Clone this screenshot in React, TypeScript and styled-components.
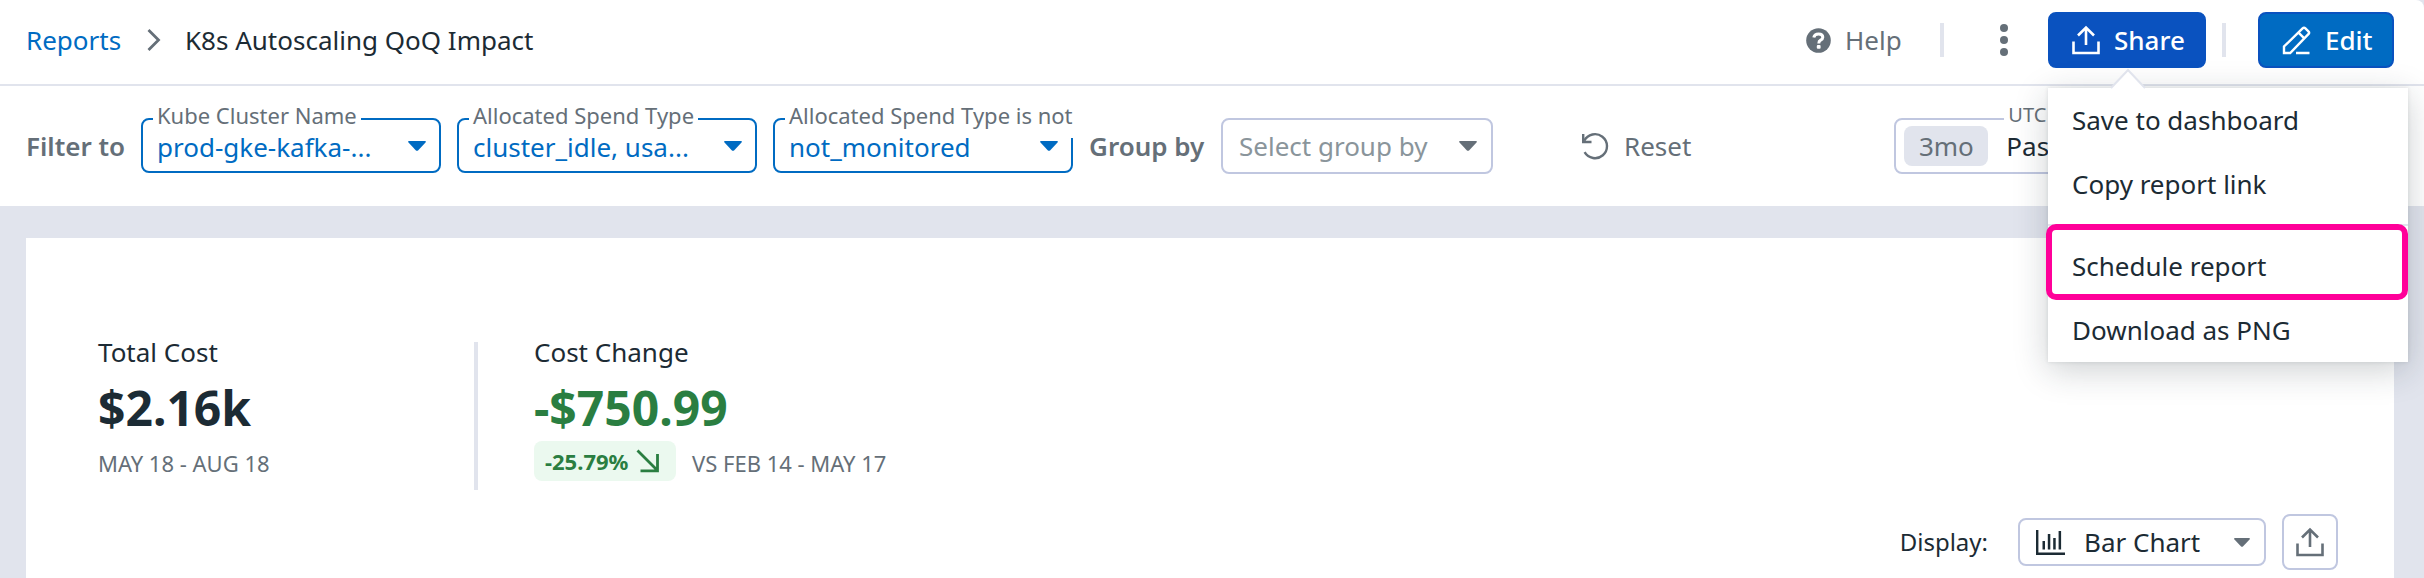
import React from 'react';
import styled, { createGlobalStyle } from 'styled-components';

const ink = '#1c2b34';
const muted = '#656f78';
const line = '#e1e4ed';
const outline = '#c0c7e0';
const blue = '#006bc2';
const darkBlue = '#0a52bf';
const green = '#2a7e41';

const GlobalStyle = createGlobalStyle`
  * { box-sizing: border-box; }
  body { margin: 0; background: ${line}; overflow: hidden; }
`;

const Page = styled.div`
  height: 578px;
  overflow: hidden;
  background: ${line};
  color: ${ink};
  font: 400 26px/36px 'Noto Sans', sans-serif;
  white-space: nowrap;
`;

const Header = styled.header`
  display: flex;
  align-items: flex-start;
  justify-content: space-between;
  height: 86px;
  padding: 12px 30px 0 26px;
  background: #fff;
  border-bottom: 2px solid ${line};
  border-top-right-radius: 8px;
`;

const Breadcrumbs = styled.nav`
  display: flex;
  align-items: center;
  height: 56px;
`;

const CrumbLink = styled.a`
  width: 121px;
  color: ${blue};
`;

const CrumbCurrent = styled.span`
  margin-left: 24px;
`;

const Actions = styled.div`
  display: flex;
  align-items: center;
  height: 56px;
`;

const HelpLink = styled.div`
  display: flex;
  align-items: center;
  gap: 14px;
  width: 134px;
  color: ${muted};
`;

const Divider = styled.div`
  width: 4px;
  height: 34px;
  background: ${line};
`;

const MoreButton = styled.div`
  display: flex;
  justify-content: center;
  width: 24px;
  margin: 0 32px 0 48px;
`;

const ShareWrap = styled.div`
  position: relative;
  margin-right: 16px;
`;

const Button = styled.div<{ $active?: boolean; $width: number }>`
  display: flex;
  align-items: center;
  gap: 14px;
  width: ${(p) => p.$width}px;
  height: 56px;
  padding-left: 22px;
  border: 2px solid ${darkBlue};
  border-radius: 8px;
  background: ${(p) => (p.$active ? darkBlue : blue)};
  color: #fff;
  font-weight: 500;
`;

const EditWrap = styled.div`
  margin-left: 32px;
`;

const Menu = styled.div`
  position: absolute;
  z-index: 3;
  top: 76px;
  left: 0;
  width: 360px;
  height: 274px;
  background: #fff;
  box-shadow: 0 8px 32px rgba(28, 43, 52, 0.22), 0 0 4px rgba(28, 43, 52, 0.12);
`;

const MenuCaret = styled.svg`
  position: absolute;
  top: -20px;
  left: 62px;
`;

const MenuItem = styled.div<{ $highlight?: boolean }>`
  position: relative;
  height: 64px;
  padding: 14px 24px;
  color: ${ink};

  ${(p) =>
    p.$highlight &&
    `&::after {
      content: '';
      position: absolute;
      inset: -10px 0 -2px -2px;
      border: 6px solid #ff0099;
      border-radius: 10px;
    }`}
`;

const MenuSeparator = styled.div`
  height: 2px;
  margin: 8px 0;
  background: ${line};
`;

const FilterBar = styled.section`
  display: flex;
  align-items: flex-start;
  height: 120px;
  padding: 32px 0 0 26px;
  background: #fff;
`;

const BarLabel = styled.span<{ $width: number }>`
  width: ${(p) => p.$width}px;
  line-height: 56px;
  font-weight: 600;
  color: ${muted};
`;

const Select = styled.div<{ $width: number; $active?: boolean; $height?: number }>`
  position: relative;
  display: flex;
  align-items: center;
  justify-content: space-between;
  width: ${(p) => p.$width}px;
  height: ${(p) => p.$height ?? 56}px;
  padding: ${(p) => (p.$active ? '0 13px 0 14px' : '0 14px 0 16px')};
  border: 2px solid ${(p) => (p.$active ? blue : outline)};
  border-radius: 8px;
  color: ${(p) => (p.$active ? blue : ink)};
`;

const FilterGroup = styled.div`
  display: flex;
  gap: 16px;
  margin-right: 16px;
`;

const FloatingLabel = styled.span<{ $left?: number; $size?: number }>`
  position: absolute;
  top: -17px;
  left: ${(p) => p.$left ?? 10}px;
  height: 35px;
  padding: 0 4px;
  background: #fff;
  color: ${muted};
  font-size: ${(p) => p.$size ?? 22}px;
  line-height: 24px;
`;

const WideLabel = styled(FloatingLabel)`
  right: -2px;
  padding-right: 0;
`;

const SelectValue = styled.span`
  position: relative;
  top: 1px;
`;

const Placeholder = styled.span`
  color: #8a959b;
`;

const ResetButton = styled.div`
  display: flex;
  align-items: center;
  gap: 15px;
  height: 56px;
  margin-left: 88px;
  color: ${muted};
`;

const DateSelect = styled(Select)`
  margin-left: 203px;
  justify-content: flex-start;
  gap: 18px;
  padding-left: 8px;
`;

const RangeBadge = styled.span`
  width: 84px;
  height: 40px;
  border-radius: 8px;
  background: ${line};
  color: ${muted};
  line-height: 40px;
  text-align: center;
`;

const Card = styled.main`
  display: flex;
  flex-direction: column;
  margin: 32px 30px 0 26px;
  height: 400px;
  padding: 104px 56px 0 72px;
  background: #fff;
`;

const Metrics = styled.section`
  display: flex;
  height: 148px;
`;

const Metric = styled.div<{ $width?: number }>`
  display: flex;
  flex-direction: column;
  width: ${(p) => (p.$width ? `${p.$width}px` : 'auto')};
`;

const MetricName = styled.div`
  height: 28px;
  line-height: 20px;
`;

const MetricValue = styled.div<{ $positive?: boolean }>`
  height: 71px;
  line-height: 75px;
  font-size: 48px;
  font-weight: 700;
  color: ${(p) => (p.$positive ? green : ink)};
`;

const MetricFoot = styled.div`
  display: flex;
  align-items: center;
  gap: 16px;
  height: 40px;
  font-size: 22px;
  color: ${muted};
`;

const FootText = styled.span`
  padding-top: 4px;
`;

const MetricDivider = styled.div`
  width: 4px;
  height: 148px;
  margin-right: 56px;
  background: ${line};
`;

const ChangeBadge = styled.span`
  display: flex;
  align-items: center;
  gap: 8px;
  width: 142px;
  height: 40px;
  padding-left: 11px;
  border-radius: 8px;
  background: #ebf9ef;
  color: ${green};
  font-weight: 700;
`;

const DisplayRow = styled.section`
  display: flex;
  align-items: center;
  justify-content: flex-end;
  height: 56px;
  margin-top: 24px;
`;

const DisplayLabel = styled.span`
  margin-right: 30px;
  font-size: 24px;
`;

const ChartName = styled.span`
  flex: 1;
  margin-left: 19px;
`;

const SquareButton = styled.div`
  display: flex;
  align-items: center;
  justify-content: center;
  width: 56px;
  height: 56px;
  margin-left: 16px;
  border: 2px solid ${outline};
  border-radius: 8px;
  color: ${muted};
`;

const Triangle = ({ width = 18, height = 10, color = 'currentColor' }: { width?: number; height?: number; color?: string }) => (
  <svg width={width} height={height} viewBox="0 0 18 10" preserveAspectRatio="none">
    <path d="M1 0H17Q18.5 .4 17.5 1.6L10.3 9.2Q9 10.4 7.7 9.2L.5 1.6Q-.5 .4 1 0Z" fill={color} />
  </svg>
);

const ShareIcon = () => (
  <svg width="28" height="30" viewBox="0 0 28 30" fill="none" stroke="currentColor" strokeWidth="2.6">
    <path d="M1.5 16.5V28H26.5V16.5" />
    <path d="M14 20V2.5M6 10.5L14 2.5L22 10.5" />
  </svg>
);

const filters = [
  { label: 'Kube Cluster Name', value: 'prod-gke-kafka-...' },
  { label: 'Allocated Spend Type', value: 'cluster_idle, usa...' },
  { label: 'Allocated Spend Type is not', value: 'not_monitored', wide: true },
];

export default function App() {
  return (
    <Page>
      <GlobalStyle />
      <Header>
        <Breadcrumbs>
          <CrumbLink>Reports</CrumbLink>
          <svg width="14" height="22" viewBox="0 0 14 22" fill="none" stroke={muted} strokeWidth="2.8">
            <path d="M1.5 1L11.5 11L1.5 21" />
          </svg>
          <CrumbCurrent>K8s Autoscaling QoQ Impact</CrumbCurrent>
        </Breadcrumbs>
        <Actions>
          <HelpLink>
            <svg width="25" height="25" viewBox="0 0 25 25">
              <circle cx="12.5" cy="12.5" r="12.3" fill={muted} />
              <path d="M7.8 9.6Q8.4 6 12.6 6Q16.8 6 16.8 9.3Q16.8 11 14.6 12.2Q12.8 13.1 12.8 15.4" fill="none" stroke="#fff" strokeWidth="3" />
              <rect x="10.8" y="17" width="3.8" height="3.8" rx="1" fill="#fff" />
            </svg>
            <span>Help</span>
          </HelpLink>
          <Divider />
          <MoreButton>
            <svg width="8" height="32" viewBox="0 0 8 32" fill={muted}>
              <circle cx="4" cy="4" r="4" />
              <circle cx="4" cy="16" r="4" />
              <circle cx="4" cy="28" r="4" />
            </svg>
          </MoreButton>
          <ShareWrap>
            <Button $active $width={158}>
              <ShareIcon />
              <span>Share</span>
            </Button>
            <Menu>
              <MenuCaret width="36" height="22" viewBox="0 0 36 22">
                <path d="M1 20L18 2L35 20V22H1Z" fill="#fff" />
                <path d="M1 20L18 2L35 20" fill="none" stroke={line} strokeWidth="2" />
              </MenuCaret>
              <MenuItem>Save to dashboard</MenuItem>
              <MenuItem>Copy report link</MenuItem>
              <MenuSeparator />
              <MenuItem $highlight>Schedule report</MenuItem>
              <MenuItem>Download as PNG</MenuItem>
            </Menu>
          </ShareWrap>
          <Divider />
          <EditWrap>
            <Button $width={136}>
              <svg width="29" height="29" viewBox="0 0 29 29" fill="none" stroke="currentColor" strokeWidth="2.4">
                <path d="M2 27V20.5L20.6 2.4Q22 1 23.4 2.4L26.4 5.4Q27.8 6.8 26.4 8.2L8.2 27Z" />
                <path d="M16.5 6.6L22.3 12.4M14 27H27.5" />
              </svg>
              <span>Edit</span>
            </Button>
          </EditWrap>
        </Actions>
      </Header>
      <FilterBar>
        <BarLabel $width={115}>Filter to</BarLabel>
        <FilterGroup>
          {filters.map((f) => (
            <Select key={f.label} $width={300} $height={55} $active>
              {f.wide ? <WideLabel>{f.label}</WideLabel> : <FloatingLabel>{f.label}</FloatingLabel>}
              <SelectValue>{f.value}</SelectValue>
              <Triangle />
            </Select>
          ))}
        </FilterGroup>
        <BarLabel $width={132}>Group by</BarLabel>
        <Select $width={272}>
          <Placeholder>Select group by</Placeholder>
          <Triangle color={muted} />
        </Select>
        <ResetButton>
          <svg width="28" height="28" viewBox="0 0 28 28" fill="none" stroke="currentColor" strokeWidth="2.4">
            <path d="M3.3 8.7A12 12 0 1 1 3.6 20.2" />
            <path d="M2.2 2V10H10.5" />
          </svg>
          <span>Reset</span>
        </ResetButton>
        <DateSelect $width={500}>
          <FloatingLabel $left={108} $size={20}>UTC</FloatingLabel>
          <RangeBadge>3mo</RangeBadge>
          <span>Past</span>
        </DateSelect>
      </FilterBar>
      <Card>
        <Metrics>
          <Metric $width={376}>
            <MetricName>Total Cost</MetricName>
            <MetricValue>$2.16k</MetricValue>
            <MetricFoot>
              <FootText>MAY 18 - AUG 18</FootText>
            </MetricFoot>
          </Metric>
          <MetricDivider />
          <Metric>
            <MetricName>Cost Change</MetricName>
            <MetricValue $positive>-$750.99</MetricValue>
            <MetricFoot>
              <ChangeBadge>
                <span>-25.79%</span>
                <svg width="24" height="24" viewBox="0 0 24 24" fill="none" stroke="currentColor" strokeWidth="2.8">
                  <path d="M1.5 1.5L21.5 21.5M21.5 5V21.8H4.5" />
                </svg>
              </ChangeBadge>
              <FootText>VS FEB 14 - MAY 17</FootText>
            </MetricFoot>
          </Metric>
        </Metrics>
        <DisplayRow>
          <DisplayLabel>Display:</DisplayLabel>
          <Select $width={248} $height={48}>
            <svg width="29" height="25" viewBox="0 0 29 25" fill={ink}>
              <path d="M0 0H2.4V22.6H29V25H0ZM6.5 11H9V19.5H6.5ZM11.8 4H14.3V19.5H11.8ZM17.2 8H19.7V19.5H17.2ZM22.6 1H25.1V19.5H22.6Z" />
            </svg>
            <ChartName>Bar Chart</ChartName>
            <Triangle width={16} height={9} color={muted} />
          </Select>
          <SquareButton>
            <ShareIcon />
          </SquareButton>
        </DisplayRow>
      </Card>
    </Page>
  );
}
